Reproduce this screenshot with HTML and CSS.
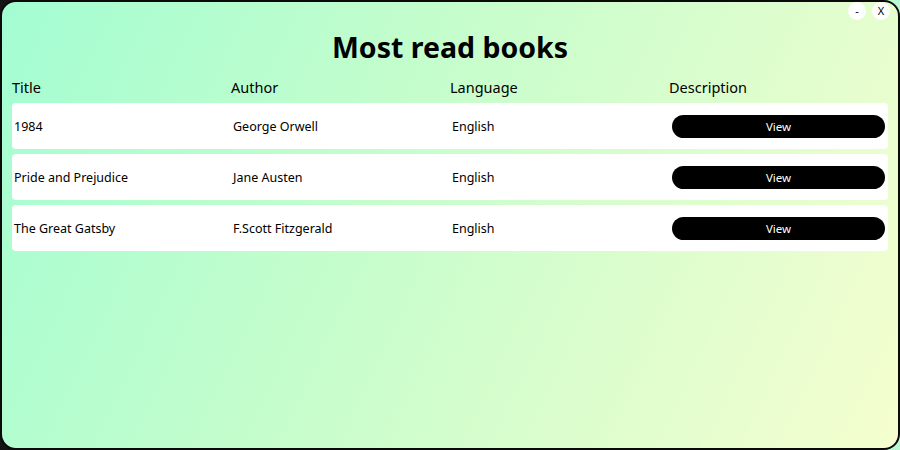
FILE: index.html
```html
<!DOCTYPE html>
<html>
<head>
<meta charset="utf-8">
<link rel="stylesheet" href="styles.css">
</head>
<body>
<div class="window">
  <div class="controls">
    <span class="ctrl">-</span>
    <span class="ctrl">X</span>
  </div>
  <h1 class="title">Most read books</h1>
  <div class="table">
    <div class="head">
      <div>Title</div>
      <div>Author</div>
      <div>Language</div>
      <div>Description</div>
    </div>
    <div class="row">
      <div class="cell">1984</div>
      <div class="cell">George Orwell</div>
      <div class="cell">English</div>
      <div class="cell"><button class="view">View</button></div>
    </div>
    <div class="row">
      <div class="cell">Pride and Prejudice</div>
      <div class="cell">Jane Austen</div>
      <div class="cell">English</div>
      <div class="cell"><button class="view">View</button></div>
    </div>
    <div class="row">
      <div class="cell">The Great Gatsby</div>
      <div class="cell">F.Scott Fitzgerald</div>
      <div class="cell">English</div>
      <div class="cell"><button class="view">View</button></div>
    </div>
  </div>
</div>
</body>
</html>
```
FILE: styles.css
```css
html, body {
  margin: 0;
  padding: 0;
  width: 900px;
  height: 450px;
  overflow: hidden;
}
body {
  background: linear-gradient(to right, #141414 0 50%, #b9f9d2 50% 100%);
  font-family: "Noto Sans", "Open Sans", sans-serif;
  color: #000;
}
.window {
  position: relative;
  box-sizing: border-box;
  width: 900px;
  height: 450px;
  border: 2px solid #0a0a0a;
  border-radius: 16px;
  background: linear-gradient(115deg, #a3fdd2 0%, #c8fdcc 45%, #f5fecf 100%);
  padding: 0 10px;
}
.controls {
  position: absolute;
  top: 0;
  right: 8px;
  display: flex;
  gap: 6px;
}
.ctrl {
  width: 18px;
  height: 18px;
  border-radius: 50%;
  background: #fff;
  font-size: 11px;
  line-height: 18px;
  text-align: center;
}
.title {
  margin: 0;
  padding-top: 25px;
  height: 40px;
  line-height: 40px;
  text-align: center;
  font-size: 28.5px;
  font-weight: 700;
}
.table {
  margin-top: 10px;
  display: flex;
  flex-direction: column;
  gap: 5px;
}
.head {
  display: grid;
  grid-template-columns: repeat(4, 219px);
  font-size: 14.5px;
  line-height: 20px;
  margin-bottom: 1px;
}
.row {
  display: grid;
  grid-template-columns: repeat(4, 219px);
  align-items: center;
  height: 46px;
  background: #fff;
  border-radius: 4px;
  font-size: 12.5px;
}
.cell {
  padding-left: 2px;
}
.view {
  display: block;
  width: 213px;
  height: 23px;
  margin-left: 1px;
  border: none;
  border-radius: 12px;
  background: #000;
  color: #fff;
  font-family: "Noto Sans", "Open Sans", sans-serif;
  font-size: 11.5px;
  padding: 0;
}
```
